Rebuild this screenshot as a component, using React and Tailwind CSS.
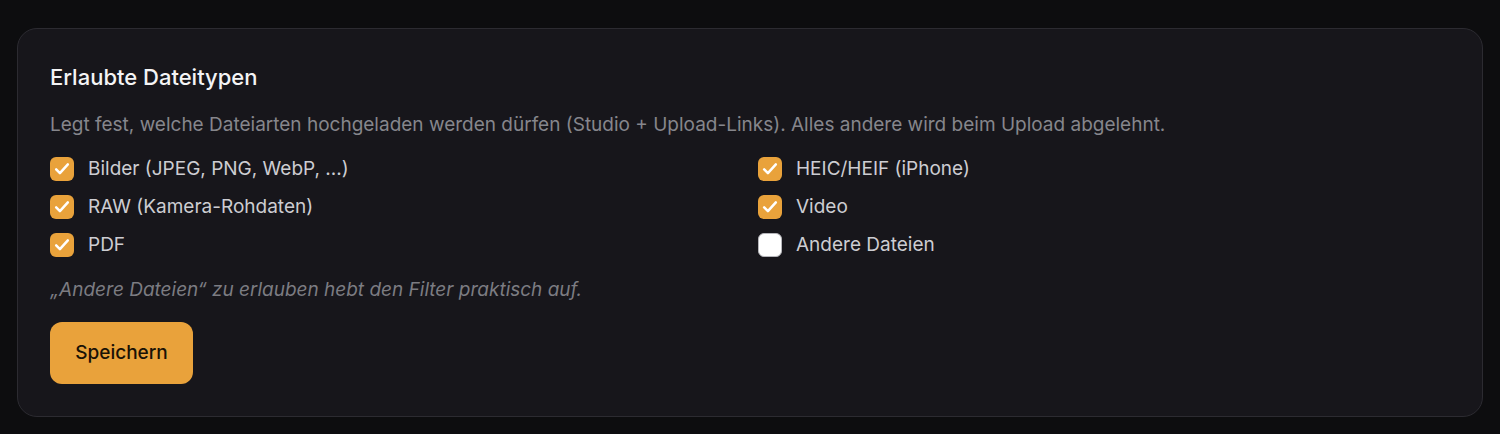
import React from 'react';

const types = [
  { label: 'Bilder (JPEG, PNG, WebP, ...)', checked: true },
  { label: 'HEIC/HEIF (iPhone)', checked: true },
  { label: 'RAW (Kamera-Rohdaten)', checked: true },
  { label: 'Video', checked: true },
  { label: 'PDF', checked: true },
  { label: 'Andere Dateien', checked: false },
];

const Box = ({ checked }) =>
  checked ? (
    <span className="flex h-6 w-6 shrink-0 items-center justify-center rounded-[6px] bg-[#e9a23b]">
      <svg viewBox="0 0 24 24" className="h-5 w-5" fill="none" stroke="#fff" strokeWidth={3} strokeLinecap="round" strokeLinejoin="round">
        <path d="M5 12.5l4.5 4.5L19 6.5" />
      </svg>
    </span>
  ) : (
    <span className="h-6 w-6 shrink-0 rounded-[6px] border border-[#b5b5ba] bg-white" />
  );

export default function App() {
  return (
    <div className="min-h-[434px] bg-[#0d0d0f] px-[17px] pt-[28px] pb-[17px] font-['Inter',sans-serif]">
      <div className="rounded-[20px] border border-[#2c2b31] bg-[#17161b] px-8 pt-8 pb-8">
        <h2 className="text-[22px] leading-8 font-medium text-[#f4f4f5]">Erlaubte Dateitypen</h2>
        <p className="mt-5 text-[19px] leading-6 text-[#86868c]">
          Legt fest, welche Dateiarten hochgeladen werden dürfen (Studio + Upload-Links). Alles andere wird beim Upload abgelehnt.
        </p>
        <div className="mt-5 grid grid-cols-2 gap-x-4 gap-y-[14px]">
          {types.map((t) => (
            <label key={t.label} className="flex items-center gap-[14px]">
              <Box checked={t.checked} />
              <span className="text-[19px] leading-6 text-[#cdcdd2]">{t.label}</span>
            </label>
          ))}
        </div>
        <p className="mt-[21px] text-[19px] leading-6 italic text-[#7c7c82]">
          „Andere Dateien“ zu erlauben hebt den Filter praktisch auf.
        </p>
        <button className="mt-5 h-[62px] w-[143px] rounded-[12px] bg-[#e9a23b] text-[19px] font-medium text-[#1a1206]">
          Speichern
        </button>
      </div>
    </div>
  );
}
